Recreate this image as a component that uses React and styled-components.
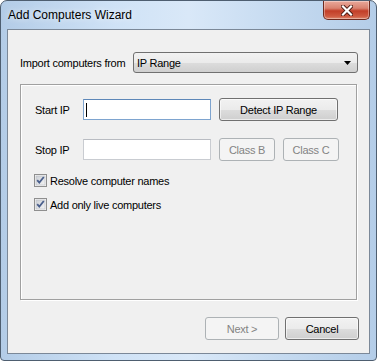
import React from "react";
import styled, { createGlobalStyle } from "styled-components";

const Global = createGlobalStyle`
  html, body { margin: 0; padding: 0; background: #ffffff; }
  body { font-family: "Liberation Sans", Arial, sans-serif; }
  * { box-sizing: border-box; }
`;

const Window = styled.div`
  width: 377px;
  height: 361px;
  border: 1px solid #4e5e70;
  border-radius: 7px 7px 4px 4px;
  background: linear-gradient(to right, #b3cce7 0%, #cfe2f6 30%, #d9e8f8 50%, #c5daf0 75%, #b4cde8 100%);
  display: flex;
  flex-direction: column;
  overflow: hidden;
`;

const TitleBar = styled.div`
  height: 28px;
  display: flex;
  align-items: flex-start;
  padding: 0 6px 0 7px;
  flex-shrink: 0;
`;

const Title = styled.div`
  flex: 1;
  font-size: 12px;
  color: #000;
  padding-top: 7px;
  text-shadow: 0 0 6px rgba(255,255,255,0.9);
`;

const CloseButton = styled.div`
  width: 47px;
  height: 19px;
  border: 1px solid #6e2a1f;
  border-top: none;
  border-radius: 0 0 5px 5px;
  background: linear-gradient(to bottom, #e9a99b 0%, #d98270 40%, #c23e28 55%, #cf5a41 85%, #dd8a70 100%);
  box-shadow: inset 0 0 0 1px rgba(255,255,255,0.35);
  display: flex;
  align-items: center;
  justify-content: center;
`;

const Client = styled.div`
  flex: 1;
  margin: 0 6px 6px 6px;
  border: 1px solid #7b8898;
  background: #f0f0f0;
  display: flex;
  flex-direction: column;
  padding: 22px 10px 13px 12px;
  font-size: 11px;
  letter-spacing: -0.25px;
  color: #000;
`;

const SourceRow = styled.div`
  display: grid;
  grid-template-columns: 113px 225px;
  align-items: center;
  height: 21px;
`;

const Label = styled.span`
  white-space: nowrap;
  color: ${(p) => (p.disabled ? "#838383" : "#000")};
`;

const Combo = styled.div`
  height: 21px;
  border: 1px solid #707070;
  border-radius: 3px;
  background: linear-gradient(to bottom, #f2f2f2 0%, #ebebeb 50%, #dddddd 50%, #cfcfcf 100%);
  display: flex;
  align-items: center;
  padding: 0 6px 0 3px;
`;

const ComboText = styled.span`
  flex: 1;
`;

const Group = styled.div`
  flex: 1;
  margin: 11px 2px 0 0;
  border: 1px solid #a0a0a0;
  box-shadow: inset 1px 1px 0 #ffffff, 1px 1px 0 #ffffff;
  padding: 13px 14px 0 14px;
  display: flex;
  flex-direction: column;
`;

const IpRow = styled.div`
  display: grid;
  grid-template-columns: 48px 128px auto;
  align-items: center;
  height: 23px;
  margin-top: ${(p) => p.$gap || 0}px;
`;

const Buttons = styled.div`
  display: flex;
  gap: 8px;
  margin-left: 8px;
`;

const TextInput = styled.div`
  height: 21px;
  border: 1px solid ${(p) => (p.$focused ? "#7ea4cf" : "#c9ccd1")};
  border-top-color: ${(p) => (p.$focused ? "#5d87b8" : "#b9bcc2")};
  background: #fff;
  display: flex;
  align-items: center;
  padding-left: 2px;
`;

const Caret = styled.span`
  width: 1px;
  height: 14px;
  background: #000;
`;

const Button = styled.div`
  width: ${(p) => p.$w}px;
  height: 23px;
  border: 1px solid ${(p) => (p.$disabled ? "#adb2b5" : "#707070")};
  border-radius: 3px;
  background: ${(p) =>
    p.$disabled
      ? "#f4f4f4"
      : "linear-gradient(to bottom, #f2f2f2 0%, #ebebeb 50%, #dddddd 50%, #cfcfcf 100%)"};
  box-shadow: ${(p) => (p.$disabled ? "none" : "inset 0 0 0 1px rgba(255,255,255,0.6)")};
  color: ${(p) => (p.$disabled ? "#838383" : "#000")};
  display: flex;
  align-items: center;
  justify-content: center;
  font-size: 11px;
`;

const CheckRow = styled.div`
  display: flex;
  align-items: center;
  gap: 3px;
  height: 13px;
  margin-left: -1px;
  margin-top: ${(p) => p.$gap}px;
`;

const Footer = styled.div`
  display: flex;
  justify-content: flex-end;
  gap: 6px;
  margin-top: 17px;
`;

function CloseGlyph() {
  return (
    <svg width="12" height="11" viewBox="0 0 12 11">
      <path d="M2 1.5 L10 9.5 M10 1.5 L2 9.5" stroke="#4a1a12" strokeWidth="4" strokeLinecap="square" />
      <path d="M2 1.5 L10 9.5 M10 1.5 L2 9.5" stroke="#ffffff" strokeWidth="2.2" strokeLinecap="square" />
    </svg>
  );
}

function Arrow() {
  return (
    <svg width="7" height="4" viewBox="0 0 7 4">
      <path d="M0 0 H7 L3.5 4 Z" fill="#000" />
    </svg>
  );
}

function CheckBox() {
  return (
    <svg width="13" height="13" viewBox="0 0 13 13">
      <defs>
        <linearGradient id="cbg" x1="0" y1="0" x2="1" y2="1">
          <stop offset="0" stopColor="#cbcfd5" />
          <stop offset="1" stopColor="#f4f4f4" />
        </linearGradient>
      </defs>
      <rect x="0.5" y="0.5" width="12" height="12" fill="#f4f4f4" stroke="#8f8f8f" />
      <rect x="2" y="2" width="9" height="9" fill="url(#cbg)" stroke="#b8bcc2" strokeWidth="0.6" />
      <path d="M3.2 6.2 L5.3 8.6 L9.8 3" fill="none" stroke="#4a5f8c" strokeWidth="1.8" />
    </svg>
  );
}

export default function App() {
  return (
    <>
      <Global />
      <Window>
        <TitleBar>
          <Title>Add Computers Wizard</Title>
          <CloseButton>
            <CloseGlyph />
          </CloseButton>
        </TitleBar>
        <Client>
          <SourceRow>
            <Label>Import computers from</Label>
            <Combo>
              <ComboText>IP Range</ComboText>
              <Arrow />
            </Combo>
          </SourceRow>
          <Group>
            <IpRow>
              <Label>Start IP</Label>
              <TextInput $focused>
                <Caret />
              </TextInput>
              <Buttons>
                <Button $w={119}>Detect IP Range</Button>
              </Buttons>
            </IpRow>
            <IpRow $gap={17}>
              <Label>Stop IP</Label>
              <TextInput />
              <Buttons>
                <Button $w={56} $disabled>Class B</Button>
                <Button $w={56} $disabled>Class C</Button>
              </Buttons>
            </IpRow>
            <CheckRow $gap={13}>
              <CheckBox />
              <Label>Resolve computer names</Label>
            </CheckRow>
            <CheckRow $gap={11}>
              <CheckBox />
              <Label>Add only live computers</Label>
            </CheckRow>
          </Group>
          <Footer>
            <Button $w={74} $disabled>Next &gt;</Button>
            <Button $w={74}>Cancel</Button>
          </Footer>
        </Client>
      </Window>
    </>
  );
}
